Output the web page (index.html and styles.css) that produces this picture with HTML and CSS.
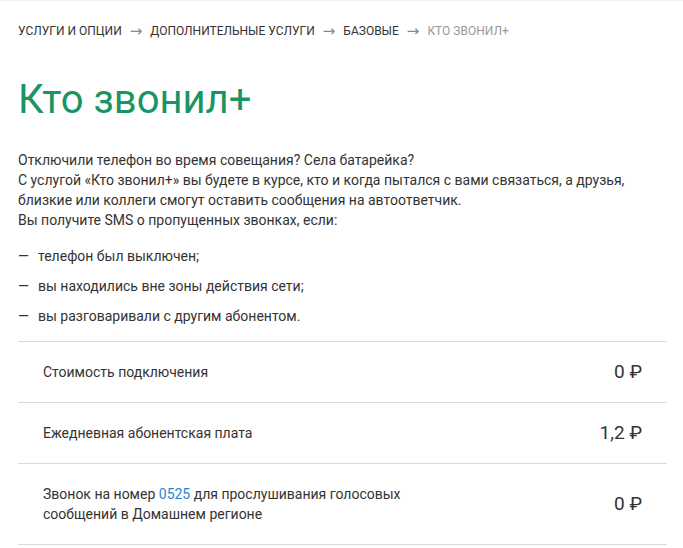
FILE: index.html
```html
<!DOCTYPE html>
<html lang="ru">
<head>
<meta charset="utf-8">
<link rel="stylesheet" href="styles.css">
</head>
<body>
<div class="page">
  <nav class="crumbs">
    <a class="crumb">Услуги и опции</a><span class="arrow">→</span>
    <a class="crumb">Дополнительные услуги</a><span class="arrow">→</span>
    <a class="crumb">Базовые</a><span class="arrow">→</span>
    <span class="crumb current">Кто звонил+</span>
  </nav>
  <h1 class="title">Кто звонил+</h1>
  <p class="intro">Отключили телефон во время совещания? Села батарейка?<br>С услугой «Кто звонил+» вы будете в курсе, кто и когда пытался с вами связаться, а друзья, близкие или коллеги смогут оставить сообщения на автоответчик.<br>Вы получите SMS о пропущенных звонках, если:</p>
  <ul class="list">
    <li class="item">телефон был выключен;</li>
    <li class="item">вы находились вне зоны действия сети;</li>
    <li class="item">вы разговаривали с другим абонентом.</li>
  </ul>
  <div class="table">
    <div class="row">
      <div class="label">Стоимость подключения</div>
      <div class="value">0 ₽</div>
    </div>
    <div class="row">
      <div class="label">Ежедневная абонентская плата</div>
      <div class="value">1,2 ₽</div>
    </div>
    <div class="row">
      <div class="label">Звонок на номер <a class="link">0525</a> для прослушивания голосовых<br>сообщений в Домашнем регионе</div>
      <div class="value">0 ₽</div>
    </div>
  </div>
</div>
</body>
</html>
```

FILE: styles.css
```css
html, body {
  margin: 0;
  padding: 0;
  background: #fff;
}
body {
  font-family: Roboto, "Noto Sans", "DejaVu Sans", sans-serif;
  color: #333;
  border-top: 1px solid #f2f2f2;
}
.page {
  padding: 0 16px 0 18px;
}
.crumbs {
  display: flex;
  align-items: center;
  gap: 7px;
  padding-top: 22px;
  font-size: 12px;
  line-height: 16px;
  text-transform: uppercase;
}
.crumb {
  color: #333;
  text-decoration: none;
}
.crumb.current {
  color: #999;
}
.arrow {
  color: #888;
  font-family: "DejaVu Sans", sans-serif;
  font-size: 15px;
  margin: 0 1px;
}
.title {
  margin: 37px 0 0;
  font-size: 40px;
  line-height: 48px;
  font-weight: 400;
  color: #1a9462;
}
.intro {
  margin: 26px 0 0;
  font-size: 14px;
  line-height: 20px;
}
.list {
  list-style: none;
  margin: 16px 0 0;
  padding: 0;
}
.item {
  position: relative;
  padding-left: 20px;
  font-size: 14px;
  line-height: 20px;
  margin-bottom: 10px;
}
.item::before {
  content: "—";
  position: absolute;
  left: 0;
  top: 0;
  color: #333;
}
.table {
  margin-top: 15px;
  border-top: 1px solid #d9d9d9;
}
.row {
  display: flex;
  align-items: center;
  justify-content: space-between;
  padding: 20px 25px 20px;
  border-bottom: 1px solid #d9d9d9;
}
.label {
  font-size: 14px;
  line-height: 20px;
}
.value {
  font-size: 19px;
  line-height: 20px;
  color: #333;
}
.link {
  color: #2a85d0;
  text-decoration: none;
}
```
